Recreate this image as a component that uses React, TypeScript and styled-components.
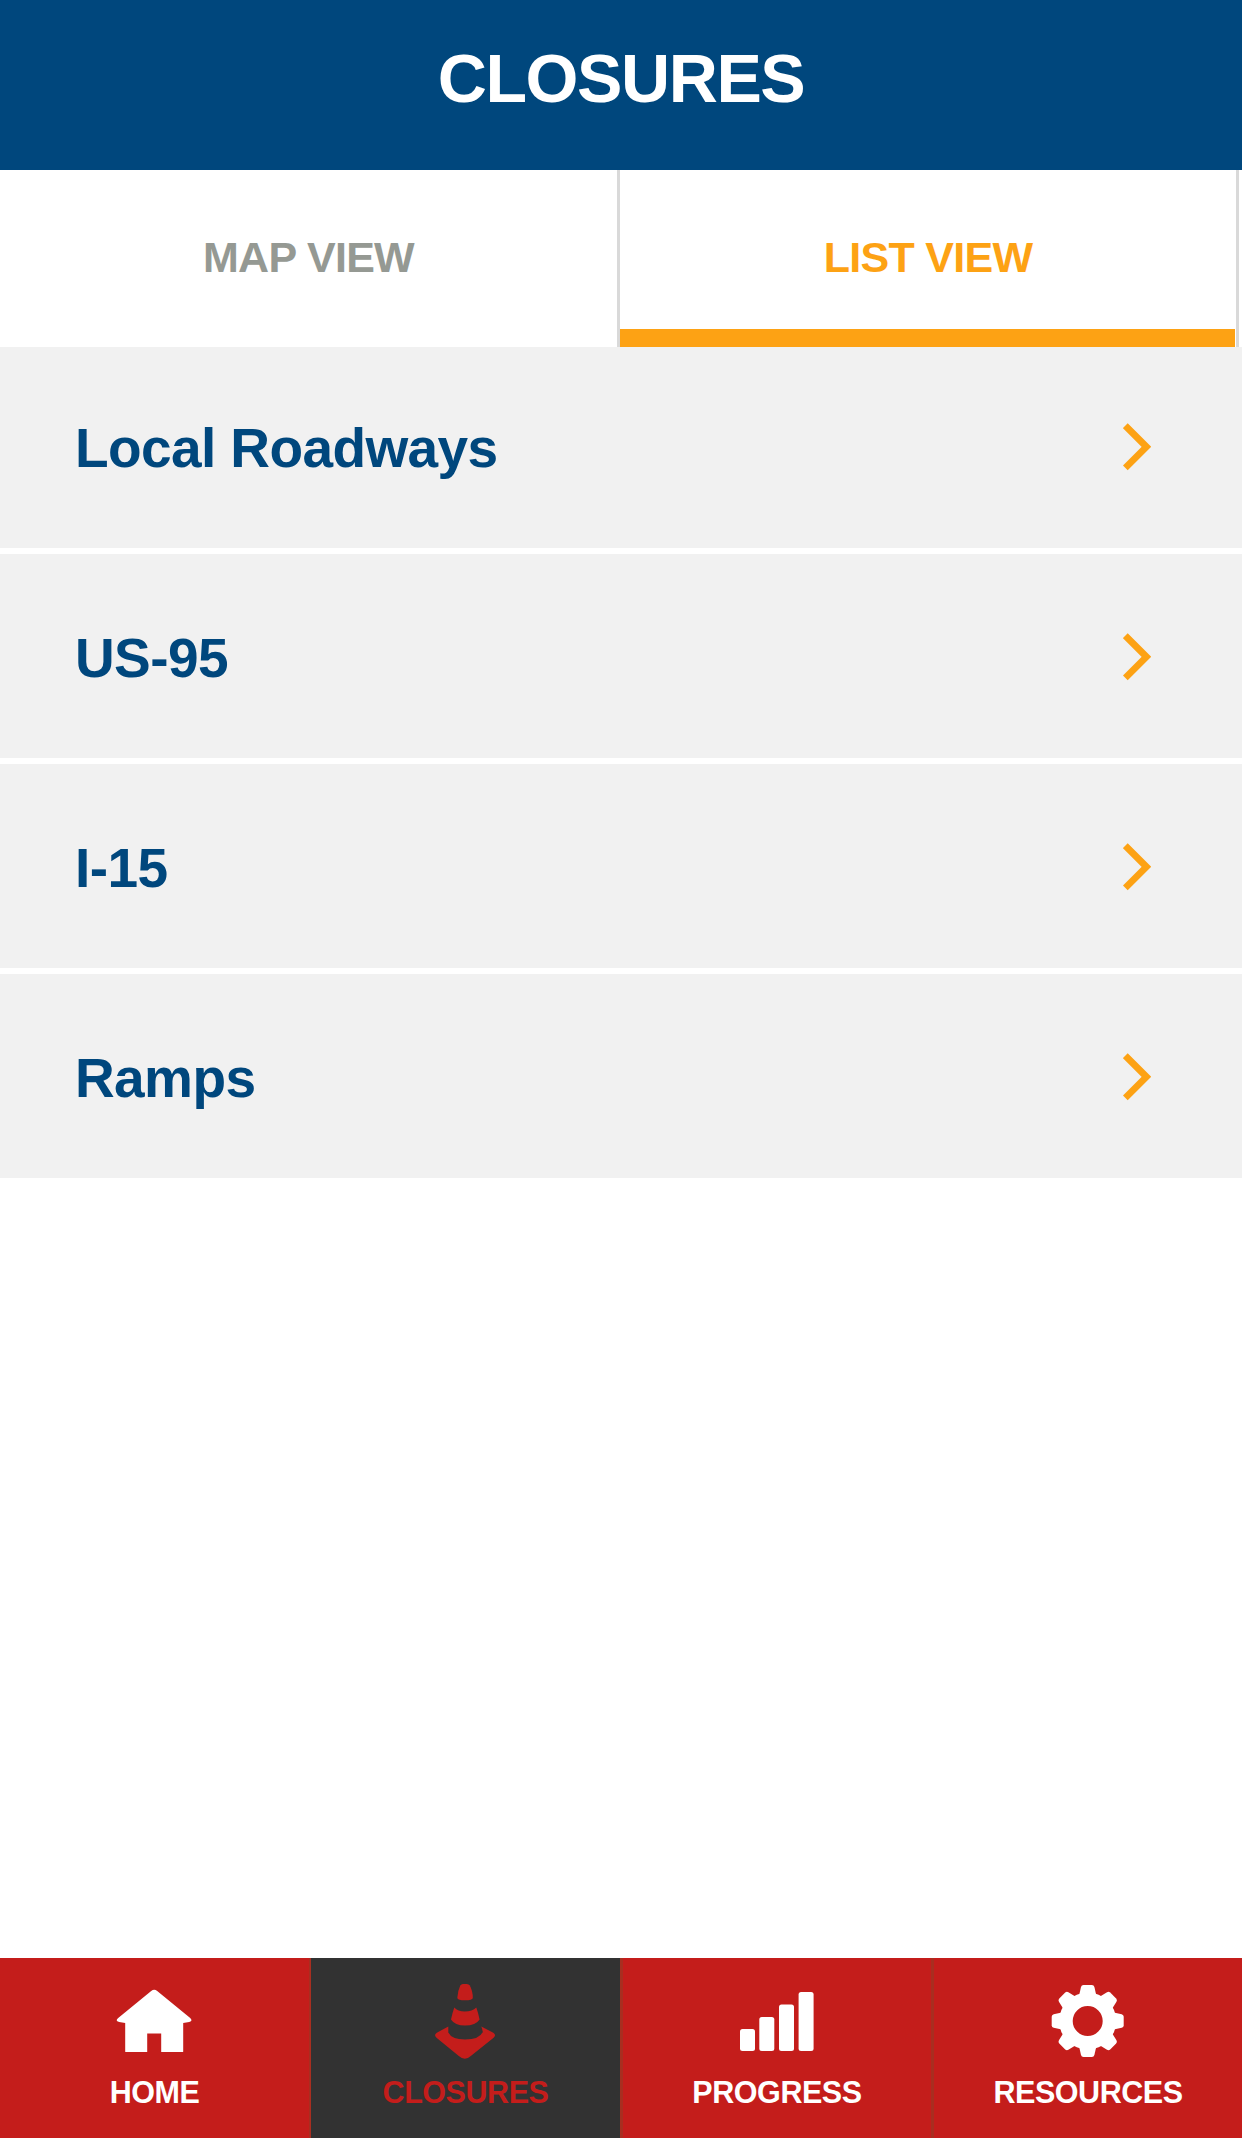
import React from "react";
import styled, { createGlobalStyle } from "styled-components";

const GlobalStyle = createGlobalStyle`
  * { box-sizing: border-box; }
  body { margin: 0; background: #fff; font-family: "Liberation Sans", Arial, sans-serif; font-weight: 700; }
  button { font: inherit; border: 0; padding: 0; margin: 0; background: none; color: inherit; }
`;

const Screen = styled.div`
  display: flex;
  flex-direction: column;
  width: 1242px;
  height: 2138px;
  overflow: hidden;
  background: #fff;
`;

const Header = styled.header`
  flex: none;
  height: 170px;
  padding-top: 38px;
  background: #00477d;
  color: #fff;
  text-align: center;
`;

const Title = styled.h1`
  margin: 0;
  font-size: 68px;
  line-height: 80px;
  letter-spacing: -1.4px;
`;

const Tabs = styled.div`
  flex: none;
  display: flex;
  height: 177px;
  padding-right: 3px;
`;

const Tab = styled.button<{ $active?: boolean }>`
  display: flex;
  flex-direction: column;
  width: ${(p) => (p.$active ? 619 : 620)}px;
  border-right: 3px solid #d9d9d9;
  color: ${(p) => (p.$active ? "#fda214" : "#959993")};
`;

const TabLabel = styled.span`
  flex: 1;
  align-self: stretch;
  padding-top: 62px;
  text-align: center;
  font-size: 43px;
  line-height: 50px;
  letter-spacing: -0.7px;
`;

const Underline = styled.span`
  height: 18px;
  margin-right: 1px;
  background: #fda214;
`;

const List = styled.main`
  flex: 1;
  display: flex;
  flex-direction: column;
  gap: 6px;
`;

const Row = styled.button`
  display: flex;
  align-items: flex-end;
  justify-content: space-between;
  height: 204px;
  padding: 0 91px 68px 75px;
  background: #f1f1f1;
  color: #00477d;
  &:first-child { height: 201px; }
`;

const RowLabel = styled.span`
  font-size: 55px;
  line-height: 64px;
  letter-spacing: -0.6px;
`;

const Chevron = styled.svg`
  width: 28px;
  height: 48px;
  margin-bottom: 9px;
`;

const Nav = styled.nav`
  flex: none;
  display: grid;
  grid-template-columns: 311px 309px 314px 308px;
  height: 180px;
`;

const NavItem = styled.button<{ $active?: boolean; $left?: number; $right?: number }>`
  display: flex;
  flex-direction: column;
  align-items: center;
  border: 0 solid #a82e20;
  border-left-width: ${(p) => p.$left ?? 0}px;
  border-right-width: ${(p) => p.$right ?? 0}px;
  background: ${(p) => (p.$active ? "#323232" : "#c41d1b")};
  color: ${(p) => (p.$active ? "#c41d1b" : "#fff")};
`;

const IconBox = styled.span`
  display: block;
  height: 116px;
  padding-top: 14px;
`;

const NavIcon = styled.svg`
  display: block;
  width: 80px;
  height: 88px;
  fill: currentColor;
`;

const NavLabel = styled.span`
  font-size: 30.5px;
  line-height: 36px;
  letter-spacing: -0.45px;
`;

/* Nav glyphs share an 80x88 box. */
const HomeIcon = () => (
  <NavIcon viewBox="0 0 80 88">
    <path
      transform="translate(-0.800 0)"
      d="M37 19Q40 16.500 43 19L76 46Q79 49 75 50L69 51V79.500Q69 80 68.500 80H47V61.500H33V80H11.500Q11 80 11 79.500V51L5 50Q0.500 49 4 46Z"
    />
  </NavIcon>
);

const ConeIcon = () => (
  <NavIcon viewBox="0 0 80 88">
    <g transform="translate(-1.200 0)">
      <path d="M35.500 13.500Q36.500 12 38 12H42Q44 12 45 13.500Q48 19 48 26Q47.500 28.300 40.200 28.300Q33 28.300 32.500 26Q32.800 19 35.500 13.500Z" />
      <path d="M29.500 35.500Q33 39.500 40 39.500Q47.500 39.500 51.500 35.500Q53.500 41 54.800 47.500Q51 53.500 40.200 53.500Q30 53.500 26.200 47.500Q27.500 41 29.500 35.500Z" />
      <path d="M23.500 54.500V60.500Q27 67.500 40.200 67.500Q54.500 67.500 58 60Q57.500 57 56.500 54.500L68.500 60.800Q72 63 68.500 66L46 84Q40.200 89.500 34 84L12 66Q8.500 63 12 60.800Z" />
    </g>
  </NavIcon>
);

const BarsIcon = () => (
  <NavIcon viewBox="0 0 80 88">
    <rect x="3" y="57" width="15" height="22" rx="2.500" />
    <rect x="22.300" y="45" width="15" height="34" rx="2.500" />
    <rect x="42" y="32.500" width="15" height="46.500" rx="2.500" />
    <rect x="61.600" y="20" width="15" height="59" rx="2.500" />
  </NavIcon>
);

const GearIcon = () => (
  <NavIcon viewBox="0 0 80 88">
    <g transform="translate(39.700 49)">
      <path
        fillRule="evenodd"
        d="M0-28.500A28.500 28.500 0 1 1 0 28.500A28.500 28.500 0 1 1 0-28.500ZM0-15A15 15 0 1 0 0 15A15 15 0 1 0 0-15Z"
      />
      {[0, 45, 90, 135, 180, 225, 270, 315].map((a) => (
        <path key={a} transform={`rotate(${a})`} d="M-8.500-26L-6.700-34Q-6.200-36 -4.200-36H4.200Q6.200-36 6.700-34L8.500-26Z" />
      ))}
    </g>
  </NavIcon>
);

const rows = ["Local Roadways", "US-95", "I-15", "Ramps"];

const navItems = [
  { label: "HOME", Icon: HomeIcon, right: 2 },
  { label: "CLOSURES", Icon: ConeIcon, active: true },
  { label: "PROGRESS", Icon: BarsIcon, left: 3, right: 3 },
  { label: "RESOURCES", Icon: GearIcon },
];

export default function App() {
  return (
    <Screen>
      <GlobalStyle />
      <Header>
        <Title>CLOSURES</Title>
      </Header>
      <Tabs>
        <Tab>
          <TabLabel>MAP VIEW</TabLabel>
        </Tab>
        <Tab $active>
          <TabLabel>LIST VIEW</TabLabel>
          <Underline />
        </Tab>
      </Tabs>
      <List>
        {rows.map((label) => (
          <Row key={label}>
            <RowLabel>{label}</RowLabel>
            <Chevron viewBox="0 0 28 48">
              <path d="M2.300 2.700L23.400 23.800L2.300 44.900" fill="none" stroke="#fda214" strokeWidth="6.800" />
            </Chevron>
          </Row>
        ))}
      </List>
      <Nav>
        {navItems.map(({ label, Icon, active, left, right }) => (
          <NavItem key={label} $active={active} $left={left} $right={right}>
            <IconBox>
              <Icon />
            </IconBox>
            <NavLabel>{label}</NavLabel>
          </NavItem>
        ))}
      </Nav>
    </Screen>
  );
}
